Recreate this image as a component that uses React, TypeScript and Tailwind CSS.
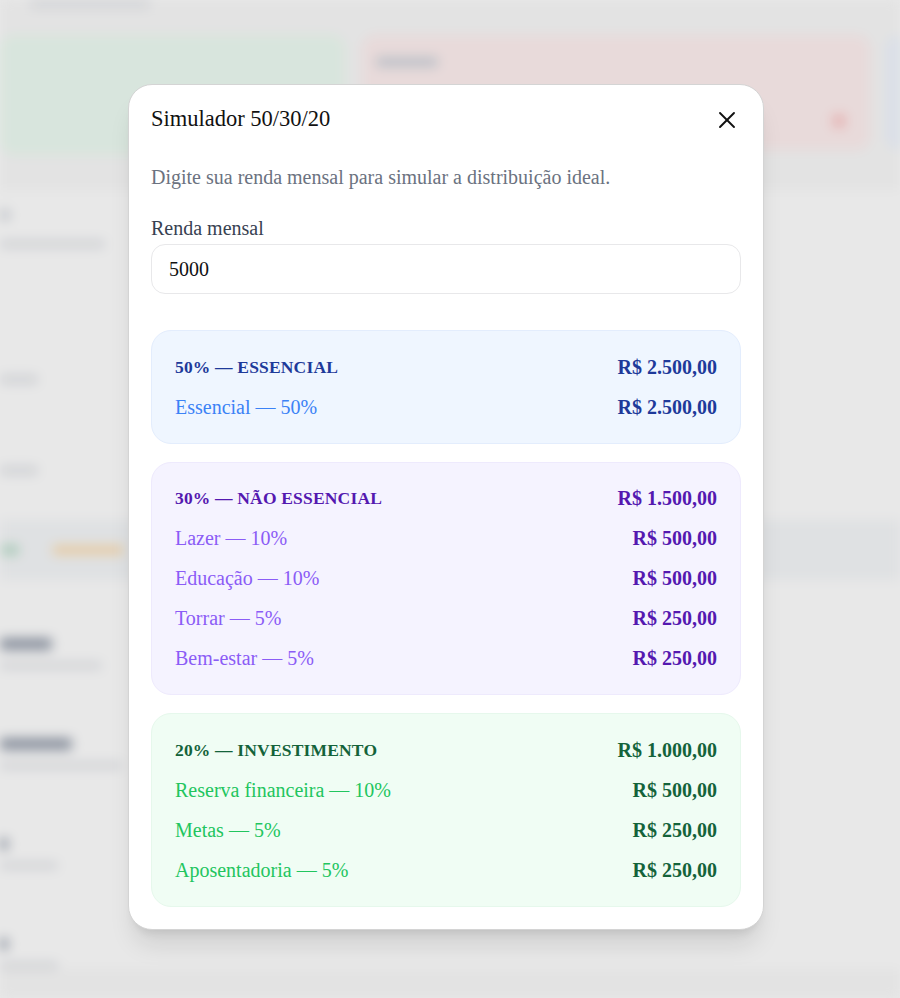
import { X } from "lucide-react";

type Row = { label: string; value: string };
type Group = {
  title: string;
  total: string;
  rows: Row[];
  box: string;
  head: string;
  item: string;
};

const groups: Group[] = [
  {
    title: "50% — Essencial",
    total: "R$ 2.500,00",
    rows: [{ label: "Essencial — 50%", value: "R$ 2.500,00" }],
    box: "py-4 bg-[#eff6ff] border-[#e3edfd]",
    head: "text-[#1e3a9a]",
    item: "text-[#3b82f6]",
  },
  {
    title: "30% — Não essencial",
    total: "R$ 1.500,00",
    rows: [
      { label: "Lazer — 10%", value: "R$ 500,00" },
      { label: "Educação — 10%", value: "R$ 500,00" },
      { label: "Torrar — 5%", value: "R$ 250,00" },
      { label: "Bem-estar — 5%", value: "R$ 250,00" },
    ],
    box: "pt-[15px] pb-4 bg-[#f5f3ff] border-[#eeeafd]",
    head: "text-[#5418b0]",
    item: "text-[#8b5cf6]",
  },
  {
    title: "20% — Investimento",
    total: "R$ 1.000,00",
    rows: [
      { label: "Reserva financeira — 10%", value: "R$ 500,00" },
      { label: "Metas — 5%", value: "R$ 250,00" },
      { label: "Aposentadoria — 5%", value: "R$ 250,00" },
    ],
    box: "py-4 bg-[#f0fdf4] border-[#e6f8ec]",
    head: "text-[#14633a]",
    item: "text-[#22c55e]",
  },
];

function Backdrop() {
  return (
    <div className="h-[998px] w-[900px] overflow-hidden bg-[#fafafa] blur-[6px]">
      <div className="flex h-[35px] items-start pl-[30px]">
        <div className="h-[8px] w-[120px] rounded bg-gray-200" />
      </div>
      <div className="flex gap-[17px]">
        <div className="h-[120px] w-[345px] shrink-0 rounded-[14px] bg-[#eefcf3]" />
        <div className="flex h-[115px] w-[508px] shrink-0 flex-col justify-between rounded-[14px] bg-[#fff0f0] px-[14px] py-[22px]">
          <div className="h-[10px] w-[62px] rounded bg-gray-300" />
          <div className="flex justify-end pr-[10px]">
            <div className="h-[14px] w-[14px] rounded bg-[#fecaca]" />
          </div>
        </div>
        <div className="h-[115px] w-[60px] shrink-0 rounded-[14px] bg-[#eef5ff]" />
      </div>
      <div className="mt-[35px] flex h-[330px] flex-col bg-white pt-[20px]">
        <div className="h-[10px] w-[10px] rounded bg-gray-300" />
        <div className="mt-[20px] h-[8px] w-[105px] rounded bg-gray-200" />
        <div className="mt-[127px] h-[9px] w-[38px] rounded bg-gray-200" />
        <div className="mt-[82px] h-[9px] w-[38px] rounded bg-gray-200" />
      </div>
      <div className="flex h-[60px] items-center gap-[32px] bg-[#f6f8fa]">
        <div className="h-[12px] w-[20px] rounded-full bg-[#c3e2d2]" />
        <div className="h-[10px] w-[72px] rounded-full bg-[#fde1b8]" />
      </div>
      <div className="flex flex-col gap-[69px] bg-white pt-[58px]">
        {[52, 72, 8, 8].map((w, i) => (
          <div key={i} className="flex flex-col gap-[12px]">
            <div className="h-[12px] rounded bg-gray-400" style={{ width: w }} />
            <div className="h-[7px] rounded bg-gray-200" style={{ width: w + 50 }} />
          </div>
        ))}
      </div>
    </div>
  );
}

export default function App() {
  return (
    <div className="relative h-[998px] w-[900px] overflow-hidden font-['Liberation_Serif',serif]">
      <Backdrop />
      <div className="absolute inset-0 bg-black/[0.09]" />

      <div className="absolute left-[128px] top-[84px] w-[636px] rounded-[24px] border border-[#d4d4d4] bg-white px-[22px] pb-[22px] pt-[18px] shadow-xl">
        <div className="flex items-center justify-between">
          <h2 className="text-[22.5px] leading-[30px] text-[#111]">Simulador 50/30/20</h2>
          <X size={28} strokeWidth={1.6} className="mt-[3px] text-[#111]" />
        </div>

        <p className="mt-[28px] text-[20px] leading-[30px] text-[#6b7280]">
          Digite sua renda mensal para simular a distribuição ideal.
        </p>

        <label className="mt-[22px] block text-[20px] leading-[28px] text-[#374151]">Renda mensal</label>
        <div className="mt-[2px] flex h-[50px] items-center rounded-[14px] border border-[#e8e8ea] px-[17px] text-[20px] text-[#111]">
          5000
        </div>

        <div className="mt-[36px] flex flex-col gap-[18px]">
          {groups.map((g) => (
            <div key={g.title} className={`rounded-[20px] border px-[23px] ${g.box}`}>
              <div className={`flex h-10 items-center justify-between font-bold ${g.head}`}>
                <span className="text-[17.5px] uppercase tracking-[0.01em]">{g.title}</span>
                <span className="text-[20px]">{g.total}</span>
              </div>
              {g.rows.map((r) => (
                <div key={r.label} className="flex h-10 items-center justify-between">
                  <span className={`text-[20px] ${g.item}`}>{r.label}</span>
                  <span className={`text-[20px] font-bold ${g.head}`}>{r.value}</span>
                </div>
              ))}
            </div>
          ))}
        </div>
      </div>
    </div>
  );
}
